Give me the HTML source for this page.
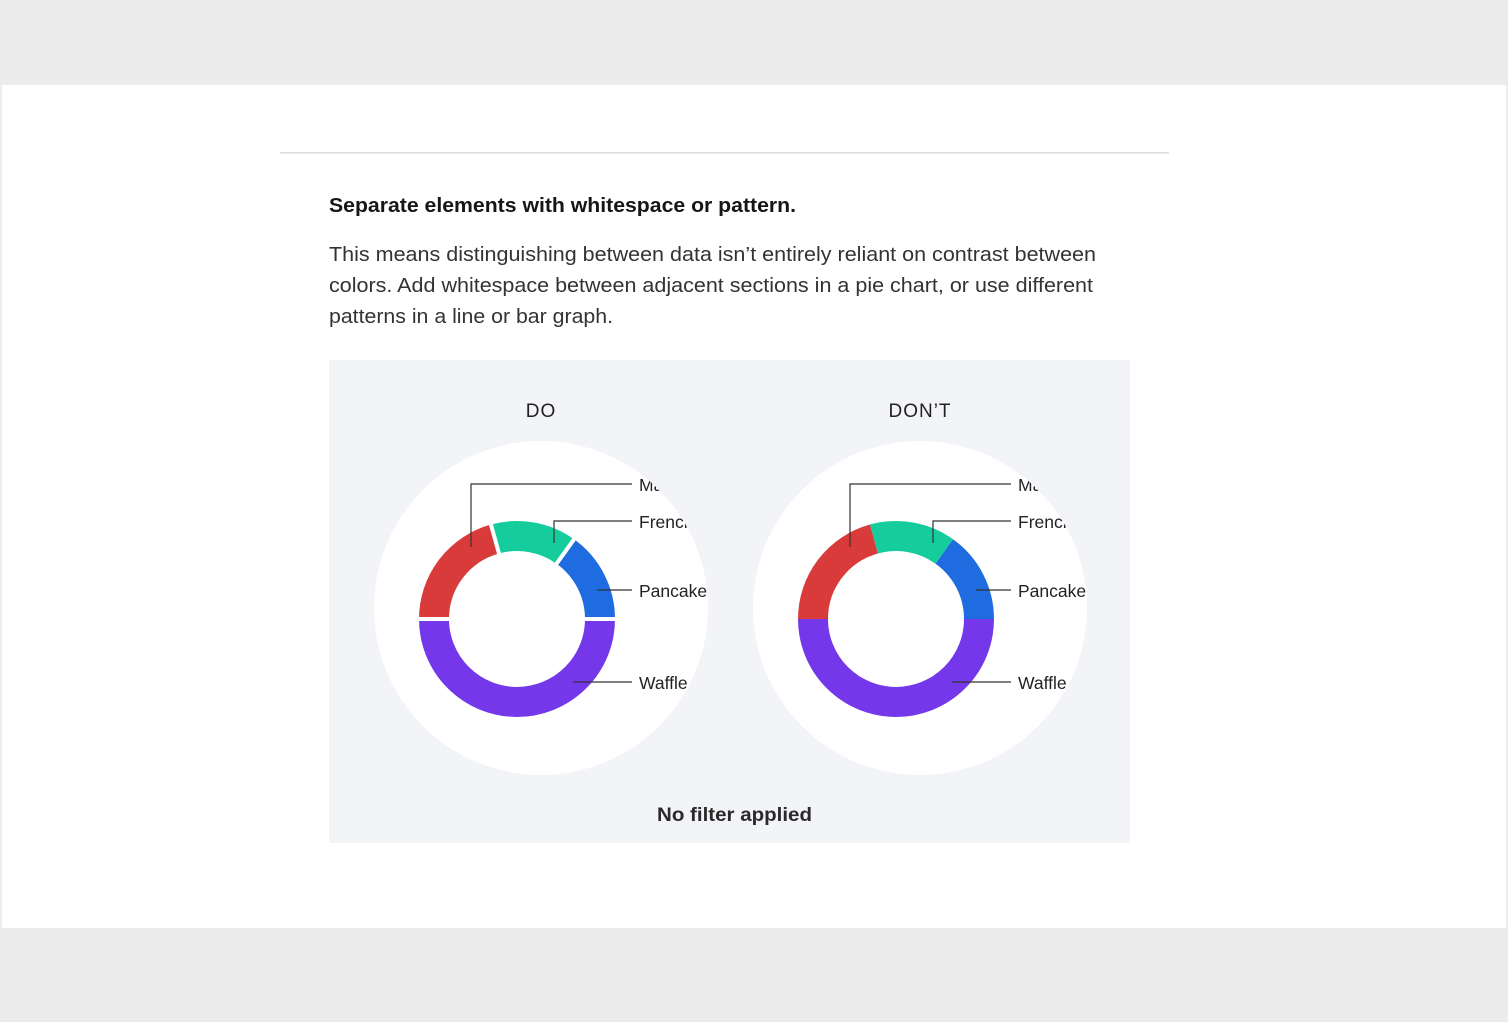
<!DOCTYPE html>
<html><head><meta charset="utf-8"><style>
html,body{margin:0;padding:0;background:#ececec;}
svg{display:block}
text{font-family:"Liberation Sans",sans-serif}
</style></head><body>
<svg width="1508" height="1022" viewBox="0 0 1508 1022" xmlns="http://www.w3.org/2000/svg">
<defs>
<clipPath id="c1"><circle cx="541" cy="608" r="167"/></clipPath>
</defs>
<rect x="0" y="0" width="1508" height="1022" fill="#ececec"/>
<rect x="2" y="85" width="1504" height="843" fill="#fff"/>
<rect x="280" y="152" width="889" height="1.5" fill="#dcdcdc"/>
<text x="329" y="212" font-size="20" font-weight="bold" fill="#161616" textLength="467" lengthAdjust="spacingAndGlyphs">Separate elements with whitespace or pattern.</text>
<g font-size="20" fill="#333">
<text x="329" y="261" textLength="767" lengthAdjust="spacingAndGlyphs">This means distinguishing between data isn’t entirely reliant on contrast between</text>
<text x="329" y="292" textLength="764" lengthAdjust="spacingAndGlyphs">colors. Add whitespace between adjacent sections in a pie chart, or use different</text>
<text x="329" y="323" textLength="284" lengthAdjust="spacingAndGlyphs">patterns in a line or bar graph.</text>
</g>
<rect x="329" y="360" width="801" height="483" fill="#f3f4f8"/>
<text x="541" y="417" font-size="19" fill="#222" text-anchor="middle" letter-spacing="1">DO</text>
<text x="920" y="417" font-size="19" fill="#222" text-anchor="middle" letter-spacing="1">DON’T</text>
<text x="657" y="821" font-size="19" font-weight="bold" fill="#2a2a2a" textLength="155" lengthAdjust="spacingAndGlyphs">No filter applied</text>

<g>
<circle cx="541" cy="608" r="167" fill="#fff"/>
<g fill="none" stroke-width="30">
<path d="M434 619 A83 83 0 0 1 495 539" stroke="#d93a3a"/>
<path d="M495 539 A83 83 0 0 1 565.3 551.5" stroke="#14cc9c"/>
<path d="M565.3 551.5 A83 83 0 0 1 600 619" stroke="#1e6ce0"/>
<path d="M600 619 A83 83 0 0 1 434 619" stroke="#7437ea"/>
</g>
<g stroke="#fff" stroke-width="4">
<line x1="416" y1="619" x2="452" y2="619"/>
<line x1="582" y1="619" x2="618" y2="619"/>
<line x1="499.5" y1="555.4" x2="490.4" y2="522.6"/>
<line x1="555.4" y1="565.3" x2="575.2" y2="537.7"/>
</g>
<g stroke="#333" stroke-width="1.2" fill="none">
<path d="M471 547 V484 H632"/>
<path d="M554 543 V521 H632"/>
<path d="M597 590 H632"/>
<path d="M573 682 H632"/>
</g>
<g clip-path="url(#c1)" font-size="17.5" fill="#222">
<text x="639" y="491">Maple</text>
<text x="639" y="528">French toast</text>
<text x="639" y="597">Pancake</text>
<text x="639" y="689">Waffle</text>
</g>
</g>

<g transform="translate(379,0)">
<circle cx="541" cy="608" r="167" fill="#fff"/>
<g fill="none" stroke-width="30">
<path d="M434 619 A83 83 0 0 1 495 539" stroke="#d93a3a"/>
<path d="M495 539 A83 83 0 0 1 565.3 551.5" stroke="#14cc9c"/>
<path d="M565.3 551.5 A83 83 0 0 1 600 619" stroke="#1e6ce0"/>
<path d="M600 619 A83 83 0 0 1 434 619" stroke="#7437ea"/>
</g>
<g stroke="#333" stroke-width="1.2" fill="none">
<path d="M471 547 V484 H632"/>
<path d="M554 543 V521 H632"/>
<path d="M597 590 H632"/>
<path d="M573 682 H632"/>
</g>
<g clip-path="url(#c1)" font-size="17.5" fill="#222">
<text x="639" y="491">Maple</text>
<text x="639" y="528">French toast</text>
<text x="639" y="597">Pancake</text>
<text x="639" y="689">Waffle</text>
</g>
</g>
</svg>
</body></html>
